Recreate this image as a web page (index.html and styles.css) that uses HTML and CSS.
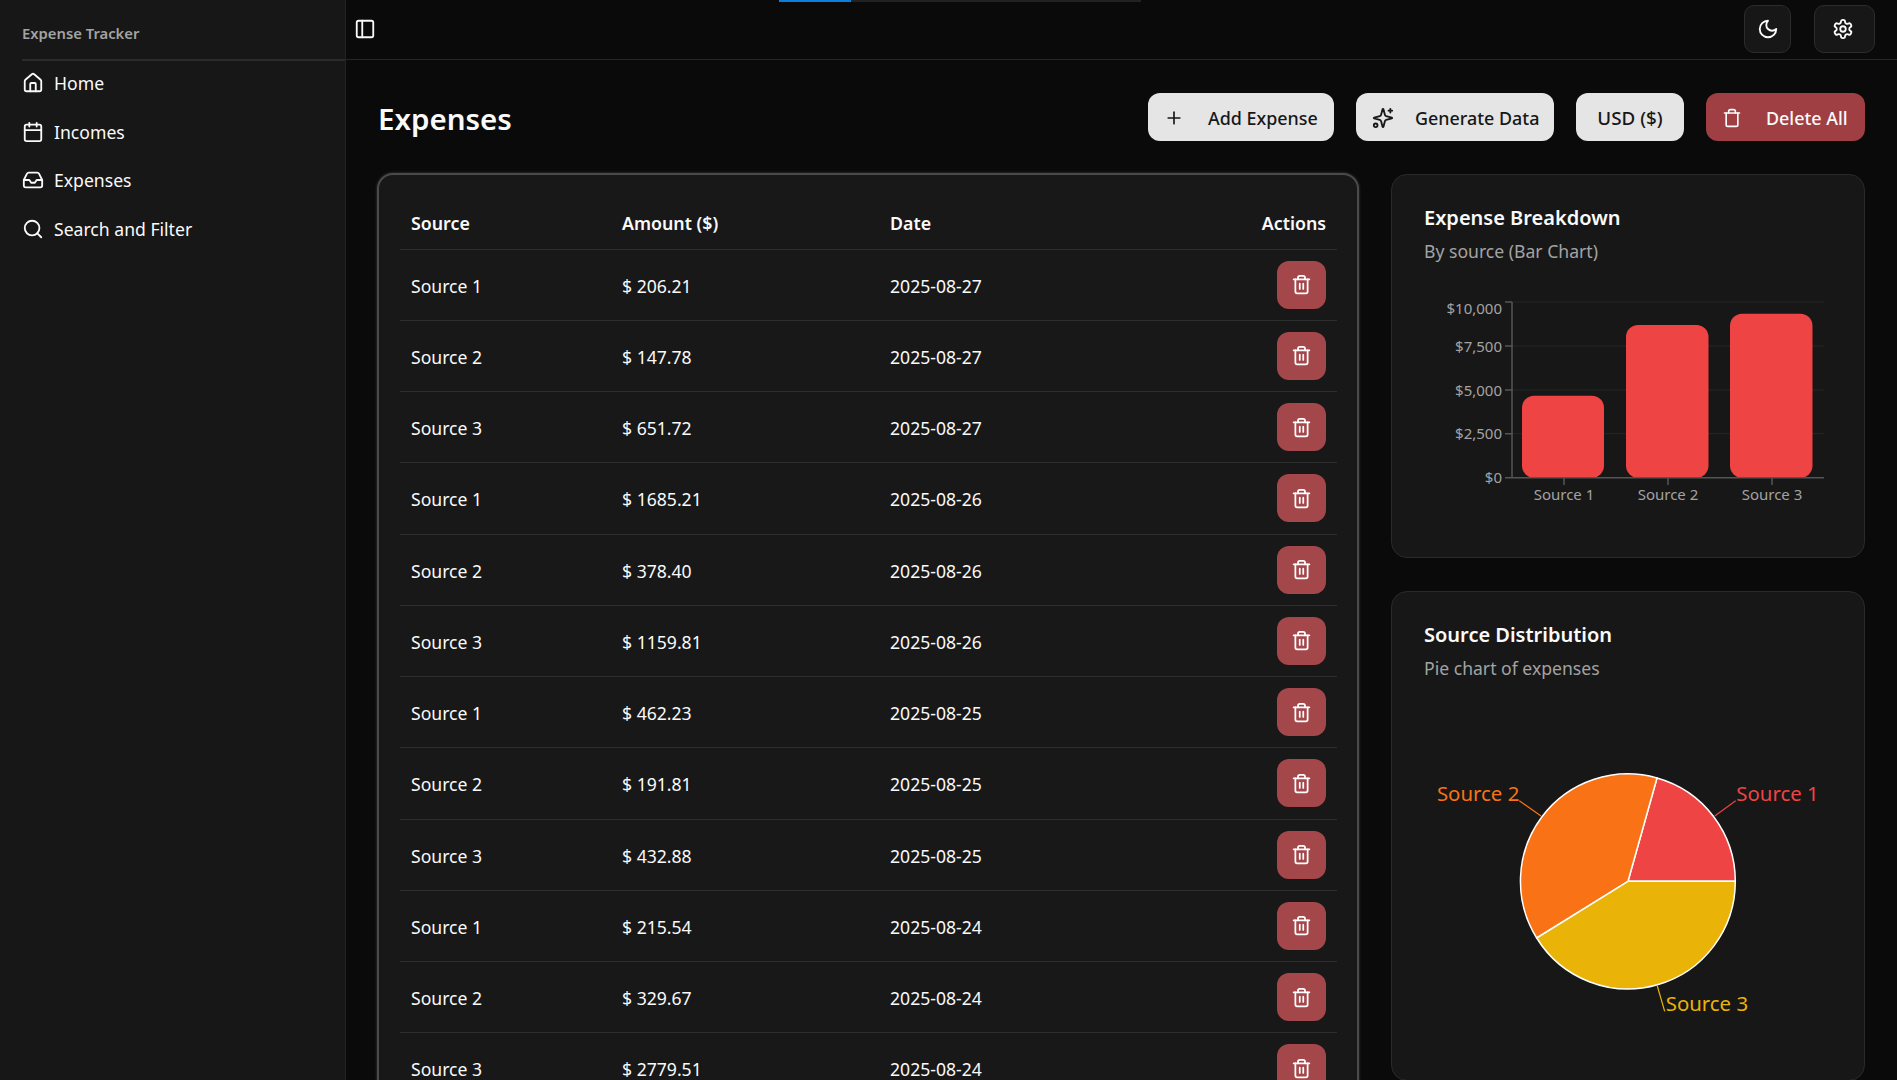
FILE: index.html
```html
<!DOCTYPE html>
<html lang="en">
<head>
    <meta charset="UTF-8">
    <meta name="viewport" content="width=device-width, initial-scale=1.0">
    <title>Expense Tracker</title>
    <link rel="stylesheet" href="styles.css">
</head>
<body>
    <svg class="sprite" xmlns="http://www.w3.org/2000/svg">
        <symbol id="trash-lines" viewBox="0 0 24 24">
            <path d="M3 6h18"/><path d="M19 6v14c0 1-1 2-2 2H7c-1 0-2-1-2-2V6"/><path d="M8 6V4c0-1 1-2 2-2h4c1 0 2 1 2 2v2"/><path d="M10 11v6"/><path d="M14 11v6"/>
        </symbol>
    </svg>

    <aside class="sidebar">
        <div class="brand">Expense Tracker</div>
        <nav class="nav">
            <a class="nav-item">
                <svg class="icon icon-lg" viewBox="0 0 24 24"><path d="M15 21v-8a1 1 0 0 0-1-1h-4a1 1 0 0 0-1 1v8"/><path d="M3 10a2 2 0 0 1 .709-1.528l7-5.999a2 2 0 0 1 2.582 0l7 5.999A2 2 0 0 1 21 10v9a2 2 0 0 1-2 2H5a2 2 0 0 1-2-2z"/></svg>
                Home
            </a>
            <a class="nav-item">
                <svg class="icon icon-lg" viewBox="0 0 24 24"><path d="M8 2v4"/><path d="M16 2v4"/><rect width="18" height="18" x="3" y="4" rx="2"/><path d="M3 10h18"/></svg>
                Incomes
            </a>
            <a class="nav-item">
                <svg class="icon icon-lg" viewBox="0 0 24 24"><path d="M22 12h-6l-2 3h-4l-2-3H2"/><path d="M5.45 5.11 2 12v6a2 2 0 0 0 2 2h16a2 2 0 0 0 2-2v-6l-3.45-6.89A2 2 0 0 0 16.76 4H7.24a2 2 0 0 0-1.79 1.11z"/></svg>
                Expenses
            </a>
            <a class="nav-item">
                <svg class="icon icon-lg" viewBox="0 0 24 24"><circle cx="11" cy="11" r="8"/><path d="m21 21-4.3-4.3"/></svg>
                Search and Filter
            </a>
        </nav>
    </aside>

    <div class="main">
        <div class="progress"><div class="progress-fill"></div></div>
        <header class="topbar">
            <svg class="icon icon-lg" viewBox="0 0 24 24"><rect width="18" height="18" x="3" y="3" rx="2"/><path d="M9 3v18"/></svg>
            <div class="topbar-actions">
                <button class="icon-btn icon-btn-moon">
                    <svg class="icon icon-lg" viewBox="0 0 24 24"><path d="M12 3a6 6 0 0 0 9 9 9 9 0 1 1-9-9Z"/></svg>
                </button>
                <button class="icon-btn icon-btn-gear">
                    <svg class="icon icon-lg" viewBox="0 0 24 24"><path d="M12.22 2h-.44a2 2 0 0 0-2 2v.18a2 2 0 0 1-1 1.73l-.43.25a2 2 0 0 1-2 0l-.15-.08a2 2 0 0 0-2.73.73l-.22.38a2 2 0 0 0 .73 2.73l.15.1a2 2 0 0 1 1 1.72v.51a2 2 0 0 1-1 1.74l-.15.09a2 2 0 0 0-.73 2.73l.22.38a2 2 0 0 0 2.73.73l.15-.08a2 2 0 0 1 2 0l.43.25a2 2 0 0 1 1 1.73V20a2 2 0 0 0 2 2h.44a2 2 0 0 0 2-2v-.18a2 2 0 0 1 1-1.73l.43-.25a2 2 0 0 1 2 0l.15.08a2 2 0 0 0 2.73-.73l.22-.39a2 2 0 0 0-.73-2.73l-.15-.08a2 2 0 0 1-1-1.74v-.5a2 2 0 0 1 1-1.74l.15-.09a2 2 0 0 0 .73-2.73l-.22-.38a2 2 0 0 0-2.73-.73l-.15.08a2 2 0 0 1-2 0l-.43-.25a2 2 0 0 1-1-1.73V4a2 2 0 0 0-2-2z"/><circle cx="12" cy="12" r="3"/></svg>
                </button>
            </div>
        </header>

        <main class="content">
            <div class="page-head">
                <h1>Expenses</h1>
                <div class="page-actions">
                    <button class="btn btn-add">
                        <svg class="icon" viewBox="0 0 24 24"><path d="M5 12h14"/><path d="M12 5v14"/></svg>
                        Add Expense
                    </button>
                    <button class="btn btn-generate">
                        <svg class="icon icon-lg" viewBox="0 0 24 24"><path d="M9.937 15.5A2 2 0 0 0 8.5 14.063l-6.135-1.582a.5.5 0 0 1 0-.962L8.5 9.936A2 2 0 0 0 9.937 8.5l1.582-6.135a.5.5 0 0 1 .963 0L14.063 8.5A2 2 0 0 0 15.5 9.937l6.135 1.581a.5.5 0 0 1 0 .964L15.5 14.063a2 2 0 0 0-1.437 1.437l-1.582 6.135a.5.5 0 0 1-.963 0z"/><path d="M20 2v4"/><path d="M22 4h-4"/><circle cx="4" cy="20" r="2"/></svg>
                        Generate Data
                    </button>
                    <button class="btn btn-currency">USD ($)</button>
                    <button class="btn btn-danger">
                        <svg class="icon" viewBox="0 0 24 24"><path d="M3 6h18"/><path d="M19 6v14c0 1-1 2-2 2H7c-1 0-2-1-2-2V6"/><path d="M8 6V4c0-1 1-2 2-2h4c1 0 2 1 2 2v2"/></svg>
                        Delete All
                    </button>
                </div>
            </div>

            <div class="layout">
                <section class="table-card">
                    <table class="expense-table">
                        <thead>
                            <tr><th>Source</th><th>Amount ($)</th><th>Date</th><th class="actions">Actions</th></tr>
                        </thead>
                        <tbody>
                            <tr><td>Source 1</td><td>$ 206.21</td><td>2025-08-27</td><td class="actions"><button class="row-delete"><svg class="icon"><use href="#trash-lines"/></svg></button></td></tr>
                            <tr><td>Source 2</td><td>$ 147.78</td><td>2025-08-27</td><td class="actions"><button class="row-delete"><svg class="icon"><use href="#trash-lines"/></svg></button></td></tr>
                            <tr><td>Source 3</td><td>$ 651.72</td><td>2025-08-27</td><td class="actions"><button class="row-delete"><svg class="icon"><use href="#trash-lines"/></svg></button></td></tr>
                            <tr><td>Source 1</td><td>$ 1685.21</td><td>2025-08-26</td><td class="actions"><button class="row-delete"><svg class="icon"><use href="#trash-lines"/></svg></button></td></tr>
                            <tr><td>Source 2</td><td>$ 378.40</td><td>2025-08-26</td><td class="actions"><button class="row-delete"><svg class="icon"><use href="#trash-lines"/></svg></button></td></tr>
                            <tr><td>Source 3</td><td>$ 1159.81</td><td>2025-08-26</td><td class="actions"><button class="row-delete"><svg class="icon"><use href="#trash-lines"/></svg></button></td></tr>
                            <tr><td>Source 1</td><td>$ 462.23</td><td>2025-08-25</td><td class="actions"><button class="row-delete"><svg class="icon"><use href="#trash-lines"/></svg></button></td></tr>
                            <tr><td>Source 2</td><td>$ 191.81</td><td>2025-08-25</td><td class="actions"><button class="row-delete"><svg class="icon"><use href="#trash-lines"/></svg></button></td></tr>
                            <tr><td>Source 3</td><td>$ 432.88</td><td>2025-08-25</td><td class="actions"><button class="row-delete"><svg class="icon"><use href="#trash-lines"/></svg></button></td></tr>
                            <tr><td>Source 1</td><td>$ 215.54</td><td>2025-08-24</td><td class="actions"><button class="row-delete"><svg class="icon"><use href="#trash-lines"/></svg></button></td></tr>
                            <tr><td>Source 2</td><td>$ 329.67</td><td>2025-08-24</td><td class="actions"><button class="row-delete"><svg class="icon"><use href="#trash-lines"/></svg></button></td></tr>
                            <tr><td>Source 3</td><td>$ 2779.51</td><td>2025-08-24</td><td class="actions"><button class="row-delete"><svg class="icon"><use href="#trash-lines"/></svg></button></td></tr>
                        </tbody>
                    </table>
                </section>

                <div class="charts">
                    <section class="chart-card chart-card-bar">
                        <h2>Expense Breakdown</h2>
                        <p>By source (Bar Chart)</p>
                        <svg class="bar-chart" viewBox="0 0 474 230" width="474" height="230">
                            <g class="grid">
                                <path d="M121 9H433M121 53H433M121 97H433M121 140.700H433"/>
                            </g>
                            <rect class="bar" x="131" y="102.700" width="82" height="82" rx="12"/>
                            <rect class="bar" x="235" y="32" width="82.500" height="152.700" rx="12"/>
                            <rect class="bar" x="339" y="20.700" width="82.500" height="164" rx="12"/>
                            <path class="axis" d="M121 9V184.700H433M114 9H121M114 53H121M114 97H121M114 140.700H121M114 184.700H121M173 184.700V192M277 184.700V192M381 184.700V192"/>
                            <g class="tick-labels">
                                <text x="111" y="21" text-anchor="end">$10,000</text>
                                <text x="111" y="58.700" text-anchor="end">$7,500</text>
                                <text x="111" y="102.700" text-anchor="end">$5,000</text>
                                <text x="111" y="146" text-anchor="end">$2,500</text>
                                <text x="111" y="190" text-anchor="end">$0</text>
                                <text x="173" y="207" text-anchor="middle">Source 1</text>
                                <text x="277" y="207" text-anchor="middle">Source 2</text>
                                <text x="381" y="207" text-anchor="middle">Source 3</text>
                            </g>
                        </svg>
                    </section>

                    <section class="chart-card chart-card-pie">
                        <h2>Source Distribution</h2>
                        <p>Pie chart of expenses</p>
                        <svg class="pie-chart" viewBox="0 44 474 336" width="474" height="336">
                            <path class="slice slice-1" d="M237 241.300L344.300 241.300A107.300 107.300 0 0 0 266 138Z"/>
                            <path class="slice slice-2" d="M237 241.300L266 138A107.300 107.300 0 0 0 145.700 298Z"/>
                            <path class="slice slice-3" d="M237 241.300L145.700 298A107.300 107.300 0 0 0 344.300 241.300Z"/>
                            <path class="leader leader-1" d="M323.700 176L344.700 160.700"/>
                            <path class="leader leader-2" d="M150 176L128.300 160.700"/>
                            <path class="leader leader-3" d="M266.300 346L273.700 371.300"/>
                            <text class="pie-label label-1" x="345.300" y="160.500">Source 1</text>
                            <text class="pie-label label-2" x="128.300" y="160.500" text-anchor="end">Source 2</text>
                            <text class="pie-label label-3" x="274.700" y="370.500">Source 3</text>
                        </svg>
                    </section>
                </div>
            </div>
        </main>
    </div>
</body>
</html>
```

FILE: styles.css
```css
* {
    box-sizing: border-box;
}
html, body {
    height: 100%;
}
body {
    margin: 0;
    display: flex;
    height: 1080px;
    overflow: hidden;
    background-color: #0a0a0a;
    color: #fafafa;
    font-family: "Noto Sans", "Open Sans", sans-serif;
    font-size: 17.600px;
}
.sprite {
    display: none;
}
.icon {
    width: 20px;
    height: 20px;
    flex: none;
    fill: none;
    stroke: currentColor;
    stroke-width: 2;
    stroke-linecap: round;
    stroke-linejoin: round;
}
.icon-lg {
    width: 22px;
    height: 22px;
}

/* sidebar */
.sidebar {
    width: 346px;
    flex: none;
    padding-left: 22px;
    background-color: #171717;
    border-right: 1px solid #222;
}
.brand {
    height: 61px;
    padding-top: 23px;
    border-bottom: 2px solid #2c2c2c;
    color: #a3a3a3;
    font-size: 14.800px;
    font-weight: 600;
    line-height: 20px;
}
.nav {
    display: flex;
    flex-direction: column;
    gap: 4.700px;
}
.nav-item {
    display: flex;
    align-items: center;
    gap: 10px;
    height: 44px;
}

/* top bar */
.main {
    flex: 1;
    min-width: 0;
    position: relative;
}
.progress {
    position: absolute;
    top: 0;
    left: 433px;
    width: 362px;
    height: 2px;
    background-color: #222;
}
.progress-fill {
    width: 72px;
    height: 100%;
    background-color: #0a7fdc;
}
.topbar {
    display: flex;
    justify-content: space-between;
    align-items: center;
    height: 60px;
    padding: 0 22px 1px 8px;
    border-bottom: 1px solid #262626;
}
.topbar-actions {
    display: flex;
    gap: 23px;
}
.icon-btn {
    display: flex;
    align-items: center;
    justify-content: center;
    height: 48px;
    background-color: #171717;
    border: 1px solid #2c2c2c;
    border-radius: 10px;
    color: #fafafa;
}
.icon-btn-moon {
    width: 47px;
}
.icon-btn-gear {
    width: 61px;
    padding-right: 10px;
}

/* page */
.content {
    padding: 33px 32px 0 31px;
}
.page-head {
    display: flex;
    justify-content: space-between;
    align-items: center;
    height: 48px;
    margin-bottom: 32px;
}
h1 {
    margin: 0 0 0 1px;
    padding-top: 2px;
    font-size: 29.500px;
    font-weight: 600;
}
.page-actions {
    display: flex;
    gap: 22px;
}
.btn {
    display: flex;
    align-items: center;
    height: 48px;
    padding: 2px 16px 0;
    gap: 24px;
    border: none;
    border-radius: 12px;
    background-color: #e5e5e5;
    color: #171717;
    font-family: inherit;
    font-size: 17.900px;
    font-weight: 500;
    white-space: nowrap;
}
.btn-add {
    width: 186px;
}
.btn-generate {
    width: 198px;
    gap: 21px;
}
.btn-currency {
    width: 108px;
    justify-content: center;
    font-size: 18.800px;
}
.btn-danger {
    width: 159px;
    background-color: #9f3f43;
    color: #fafafa;
}
.layout {
    display: grid;
    grid-template-columns: 982px 474px;
    gap: 32px;
    align-items: start;
}

/* table */
.table-card {
    padding: 11px 20px 0 21px;
    height: 1100px;
    background-color: #181818;
    border: 2px solid #4a4a4a;
    border-radius: 16px;
    box-shadow: 0 0 3px rgba(255, 255, 255, 0.22);
}
.expense-table {
    width: 100%;
    table-layout: fixed;
    border-collapse: collapse;
}
th, td {
    padding: 0 10px 0 11px;
    text-align: left;
    border-bottom: 1px solid #2e2e2e;
}
th {
    height: 63px;
    padding-top: 12px;
    font-size: 17.800px;
    font-weight: 600;
}
td {
    height: 71.250px;
    padding-top: 2px;
}
th:nth-child(1) { width: 211px; }
th:nth-child(2) { width: 269px; }
th:nth-child(3) { width: 270px; }
th:nth-child(3), td:nth-child(3) { padding-left: 10px; }
th.actions, td.actions {
    text-align: right;
    padding-right: 11px;
}
td.actions {
    padding-top: 0;
}
.row-delete {
    display: inline-flex;
    align-items: center;
    justify-content: center;
    width: 49px;
    height: 48px;
    vertical-align: middle;
    border: none;
    border-radius: 12px;
    background-color: #a4474b;
    color: #fff;
}
.row-delete .icon {
    width: 21px;
    height: 21px;
}

/* charts */
.charts {
    display: flex;
    flex-direction: column;
    gap: 33px;
    margin-top: 1px;
}
.chart-card {
    background-color: #171717;
    border: 1px solid #2a2a2a;
    border-radius: 16px;
}
.chart-card-bar {
    height: 384px;
}
.chart-card-pie {
    height: 490px;
}
.chart-card h2 {
    margin: 27px 0 0 32px;
    font-size: 20px;
    font-weight: 600;
    line-height: 32px;
}
.chart-card p {
    margin: 3px 0 0 32px;
    color: #a3a3a3;
    font-size: 17.600px;
    line-height: 28px;
}
.bar-chart, .pie-chart {
    display: block;
    margin-left: -1px;
}
.bar-chart {
    margin-top: 28px;
}
.pie-chart {
    margin-top: 2px;
}
.grid path {
    fill: none;
    stroke: #262626;
}
.bar {
    fill: #ef4444;
}
.axis {
    fill: none;
    stroke: #555;
    stroke-width: 1.500;
}
.tick-labels text {
    fill: #a3a3a3;
    font-size: 15px;
}
.slice {
    stroke: #fff;
    stroke-width: 1.500;
}
.slice-1 { fill: #ef4444; }
.slice-2 { fill: #f97316; }
.slice-3 { fill: #eab308; }
.leader {
    fill: none;
    stroke-width: 1.200;
}
.leader-1 { stroke: #ef4444; }
.leader-2 { stroke: #f97316; }
.leader-3 { stroke: #eab308; }
.pie-label {
    font-size: 20.400px;
}
.label-1 { fill: #ef4444; }
.label-2 { fill: #f97316; }
.label-3 { fill: #eab308; }
```
